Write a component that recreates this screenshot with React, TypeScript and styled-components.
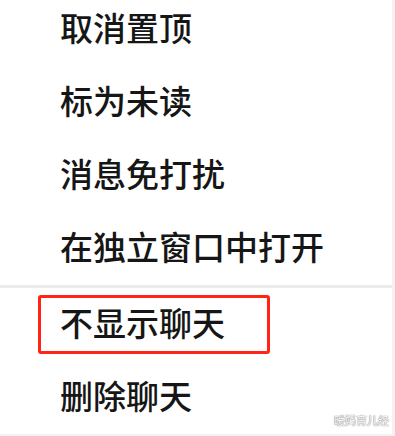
import React from 'react';
import styled, { createGlobalStyle } from 'styled-components';

const items = [
  { label: '取消置顶' },
  { label: '标为未读' },
  { label: '消息免打扰' },
  { label: '在独立窗口中打开', divider: true },
  { label: '不显示聊天', marked: true },
  { label: '删除聊天' },
];

const App = () => {
  return (
    <>
      <GlobalStyle />
      <Page>
        <Menu>
          {items.map(item => (
            <React.Fragment key={item.label}>
              <Row>
                <Label marked={item.marked}>{item.label}</Label>
              </Row>
              {item.divider && <Divider />}
            </React.Fragment>
          ))}
        </Menu>
        <Edge />
        <Watermark>暖妈育儿经</Watermark>
      </Page>
    </>
  );
};

const GlobalStyle = createGlobalStyle`
  html, body {
    margin: 0;
    padding: 0;
    background: #ffffff;
  }
  body {
    font-family: "Noto Sans CJK SC", "Noto Sans", sans-serif;
  }
`;

const Page = styled.div`
  position: relative;
  width: 395px;
  height: 436px;
  overflow: hidden;
  display: flex;
  background: #ffffff;
  border-bottom: 2px solid #f2f2f2;
  box-sizing: border-box;
`;

const Menu = styled.div`
  flex: 1;
  display: flex;
  flex-direction: column;
  margin-top: -7px;
`;

const Row = styled.div`
  height: 73px;
  flex-shrink: 0;
  display: flex;
  align-items: center;
  padding-left: 38px;
`;

const Label = styled.span<{ marked?: boolean }>`
  display: inline-flex;
  align-items: center;
  box-sizing: border-box;
  height: 59px;
  width: ${p => (p.marked ? '232px' : 'auto')};
  padding: 0 0 4px 19px;
  border: 3px solid ${p => (p.marked ? '#ff2414' : 'transparent')};
  border-radius: 3px;
  font-size: 33px;
  font-weight: 500;
  line-height: 1;
  color: #161616;
  white-space: nowrap;
`;

const Divider = styled.div`
  height: 3px;
  flex-shrink: 0;
  background: #ececec;
`;

const Edge = styled.div`
  width: 3px;
  flex-shrink: 0;
  background: #f2f2f2;
`;

const Watermark = styled.span`
  position: absolute;
  right: 6px;
  bottom: 6px;
  font-size: 11px;
  color: #ffffff;
  text-shadow: 0 0 1px #777, 0 0 1px #777;
`;

export default App;
